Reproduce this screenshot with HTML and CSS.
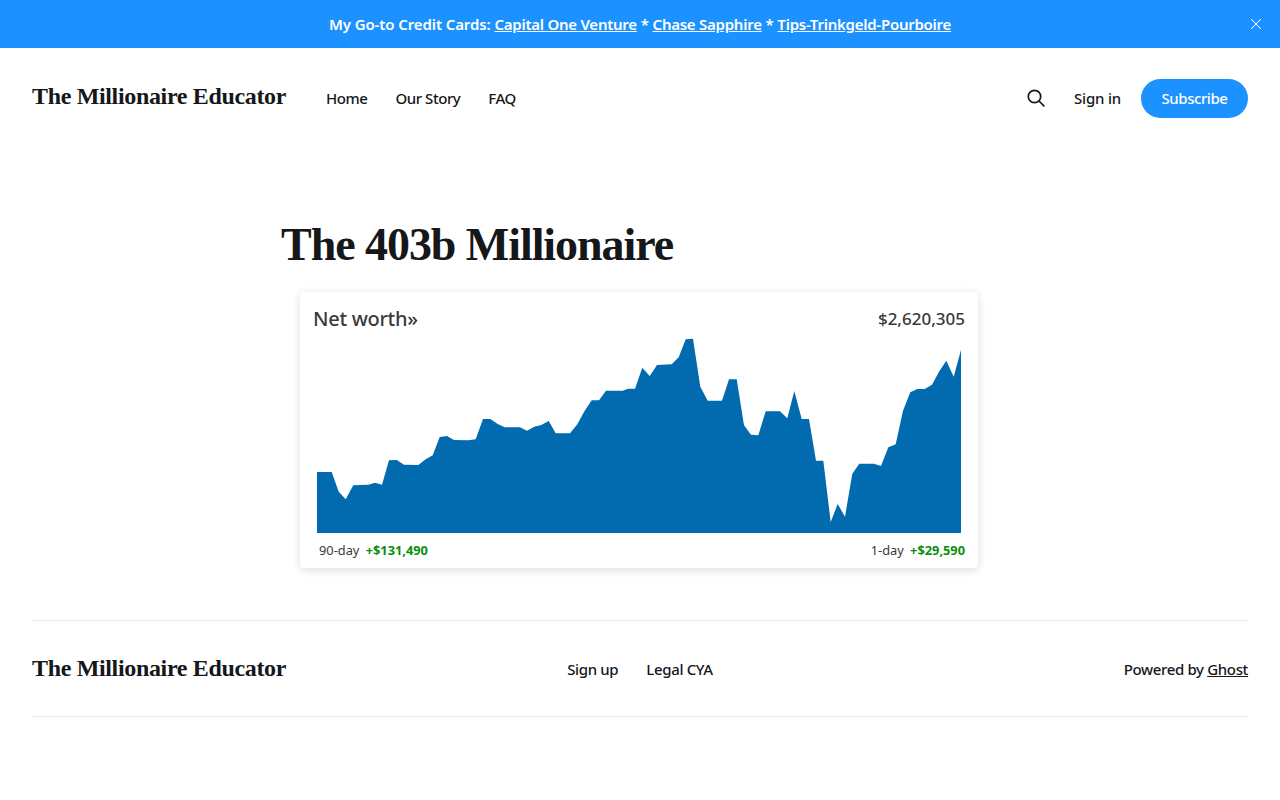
FILE: index.html
```html
<!DOCTYPE html>
<html>
<head>
	<meta charset="utf-8">
	<title>The 403b Millionaire</title>
	<link rel="stylesheet" href="styles.css">
</head>
<body>
	<div class="banner">
		<p>My Go-to Credit Cards: <a href="#">Capital One Venture</a> * <a href="#">Chase Sapphire</a> * <a href="#">Tips-Trinkgeld-Pourboire</a></p>
		<button class="banner-close" aria-label="Close">
			<svg width="12" height="12" viewBox="0 0 12 12"><path d="M1 1l10 10M11 1L1 11" stroke="#fff" stroke-width="1" fill="none"/></svg>
		</button>
	</div>
	<header class="head">
		<a class="logo" href="#">The Millionaire Educator</a>
		<nav class="menu">
			<a href="#">Home</a>
			<a href="#">Our Story</a>
			<a href="#">FAQ</a>
		</nav>
		<div class="actions">
			<svg class="search" width="20" height="20" viewBox="0 0 20 20"><circle cx="8.5" cy="8.5" r="6.2" stroke="#15171a" stroke-width="1.7" fill="none"/><path d="M13 13l5.4 5.4" stroke="#15171a" stroke-width="1.7" fill="none"/></svg>
			<a class="signin" href="#">Sign in</a>
			<a class="btn" href="#">Subscribe</a>
		</div>
	</header>
	<main class="post">
		<h1>The 403b Millionaire</h1>
		<div class="card">
			<div class="card-top">
				<span class="nw">Net worth»</span>
				<span class="total">$2,620,305</span>
			</div>
			<svg class="chart" width="644" height="195" viewBox="0 0 644 195">
				<polygon fill="#026bb0" points="0,195 0,134 14.7,134 21.7,153.7 28.7,161.3 36.3,147.3 51.3,146.7 58,144.7 65,146.7 72,122.3 79.7,122 87,126.7 101.3,127 108.7,121.3 115.7,117.3 122.7,99 130,98 137,102 151.3,102.3 158.7,101.3 166,81 173.3,81 180.7,86 187.7,89.3 203,89.3 210,92.7 217.3,88.7 224.3,87 231.7,83 238.7,95.3 253,95.3 260.3,86.3 267.7,72.7 274.7,62.3 282,62.3 289,52.7 305.7,52.7 311,50.7 318,50.7 325.3,29.7 332.7,38 340,27 354.7,26.3 361.7,19.3 368.7,1.3 376,0.7 383.3,48.7 390.7,62.7 405,62.7 412,41.3 419.7,41.3 427,87.3 434,96.7 441.3,97.3 448.7,73.3 463,73.3 470.3,80.3 477.3,53 484.7,81 492,81 499,122.7 506.3,122.7 513.7,184 520.7,166 528,178.7 535.3,135.7 542.3,125.7 557,125.7 564,128 571.3,109.3 578.7,106.3 586,72.7 593.3,54.3 600.3,51 607.7,51 615,46.7 622,33.7 629.3,22.7 636.7,38.7 644,12 644,195"/>
			</svg>
			<div class="card-foot">
				<span>90-day <b>+$131,490</b></span>
				<span>1-day <b>+$29,590</b></span>
			</div>
		</div>
	</main>
	<footer class="foot">
		<a class="logo" href="#">The Millionaire Educator</a>
		<nav class="menu">
			<a href="#">Sign up</a>
			<a href="#">Legal CYA</a>
		</nav>
		<div class="powered">Powered by <a href="#">Ghost</a></div>
	</footer>
</body>
</html>
```
FILE: styles.css
```css
*{margin:0;padding:0;box-sizing:border-box;}
body{
	background:#fff;
	color:#15171a;
	font-family:"Noto Sans",sans-serif;
	font-size:15px;
	letter-spacing:-.35px;
}
a{color:inherit;text-decoration:none;}

.banner{
	position:relative;
	height:48px;
	background:#1b92ff;
	color:#fff;
	font-weight:600;
	font-size:15px;
	letter-spacing:-.1px;
	display:flex;
	align-items:center;
	justify-content:center;
}
.banner a{text-decoration:underline;letter-spacing:-.25px;}
.banner-close{
	position:absolute;
	right:18px;
	top:18px;
	width:12px;
	height:12px;
	border:0;
	background:none;
	display:flex;
}

.head{
	display:flex;
	align-items:center;
	height:101px;
	padding:0 32px;
}
.logo{
	font-family:"Liberation Serif",serif;
	font-weight:700;
	font-size:24px;
	line-height:30px;
	letter-spacing:-.34px;
}
.head .logo{margin-top:-5px;}
.menu{
	display:flex;
	gap:28px;
	font-weight:500;
}
.head .menu{margin:-2px 0 0 40px;letter-spacing:-.45px;}
.actions{
	margin-left:auto;
	display:flex;
	align-items:center;
	font-weight:500;
}
.search{margin:-2px 28px 0 0;}
.signin{margin-top:-2px;letter-spacing:-.2px;}
.btn{
	margin-left:20px;
	width:107px;
	height:39px;
	line-height:39px;
	border-radius:20px;
	text-align:center;
	background:#1b92ff;
	color:#fff;
	letter-spacing:-.45px;
}

.post{
	width:718px;
	margin:68px auto 0;
}
h1{
	font-family:"Liberation Serif",serif;
	font-size:46px;
	line-height:56px;
	font-weight:700;
	letter-spacing:-1.05px;
}
.card{
	width:678px;
	height:276px;
	margin:19px 0 0 19px;
	padding:0 13px 0 13px;
	background:#fff;
	border-radius:4px;
	box-shadow:0 2px 10px rgba(0,0,0,.14);
	color:#3a3a3a;
	letter-spacing:0;
}
.card-top{
	display:flex;
	justify-content:space-between;
	align-items:center;
	height:46px;
	padding-top:7px;
}
.nw{font-size:20px;font-weight:500;letter-spacing:-.3px;}
.total{font-size:17px;font-weight:500;}
.chart{
	display:block;
	margin-left:4px;
}
.card-foot{
	display:flex;
	justify-content:space-between;
	padding:8px 0 0 6px;
	font-size:12.8px;
}
.card-foot b{
	margin-left:3px;
	color:#0a8f0a;
	font-weight:700;
}

.foot{
	display:grid;
	grid-template-columns:1fr auto 1fr;
	align-items:center;
	height:97px;
	margin:52px 32px 0;
	border-top:1px solid #e9eaeb;
	border-bottom:1px solid #e9eaeb;
}
.foot .logo{margin-top:-2px;}
.foot .menu{justify-content:center;}
.powered{text-align:right;font-weight:500;}
.powered a{text-decoration:underline;}
```
